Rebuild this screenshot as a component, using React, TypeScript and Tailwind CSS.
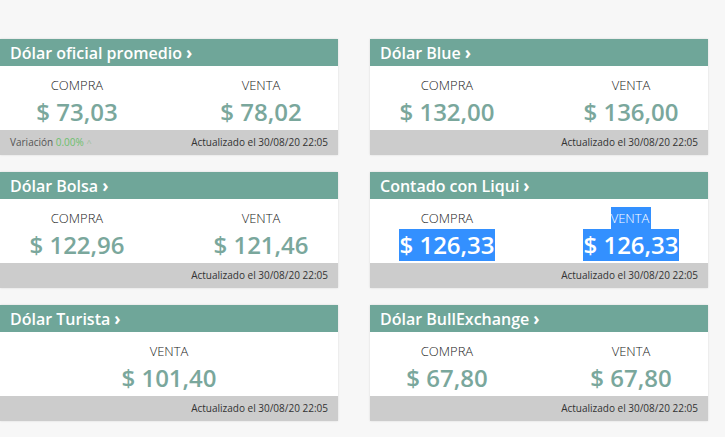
type Quote = {
  title: string;
  compra?: string;
  venta: string;
  variacion?: string;
  selected?: boolean;
};

const quotes: Quote[] = [
  { title: "Dólar oficial promedio", compra: "73,03", venta: "78,02", variacion: "0.00%" },
  { title: "Dólar Blue", compra: "132,00", venta: "136,00" },
  { title: "Dólar Bolsa", compra: "122,96", venta: "121,46" },
  { title: "Contado con Liqui", compra: "126,33", venta: "126,33", selected: true },
  { title: "Dólar Turista", venta: "101,40" },
  { title: "Dólar BullExchange", compra: "67,80", venta: "67,80" },
];

function Price({ label, value, selected, highlightLabel }: { label: string; value: string; selected?: boolean; highlightLabel?: boolean }) {
  return (
    <div className="flex flex-col items-center">
      <div className="h-[18px] flex items-end">
        <span
          className={
            "text-[13px] leading-[22px] font-light " +
            (highlightLabel ? "bg-[#3390ff] text-white pr-[2px]" : "text-[#222]")
          }
        >
          {label}
        </span>
      </div>
      <span
        className={
          "text-[24px] leading-[32px] font-semibold whitespace-nowrap " +
          (selected ? "bg-[#3390ff] text-white" : "text-[#7aa79c]")
        }
      >
        $ {value}
      </span>
    </div>
  );
}

function Card({ q }: { q: Quote }) {
  return (
    <div className="bg-white shadow-[0_0_2px_rgba(0,0,0,0.12)]">
      <div className="h-[27px] bg-[#6fa699] px-[10px] flex items-center text-white font-semibold text-[16px] leading-none">
        {q.title}
        <span className="ml-[4px] font-bold text-[17px]">›</span>
      </div>
      <div className="h-[64px] pt-[12px]">
        {q.compra ? (
          <div className="flex justify-between">
            <div className="w-[154px] flex justify-center">
              <Price label="COMPRA" value={q.compra} selected={q.selected} />
            </div>
            <div className="w-[154px] flex justify-center">
              <Price label="VENTA" value={q.venta} selected={q.selected} highlightLabel={q.selected} />
            </div>
          </div>
        ) : (
          <div className="flex justify-center">
            <Price label="VENTA" value={q.venta} />
          </div>
        )}
      </div>
      <div className="h-[25px] bg-[#cccccc] px-[10px] flex items-center justify-between text-[10px] text-[#333]">
        {q.variacion ? (
          <span className="text-[#555]">
            Variación <span className="text-[#6cbf6c]">{q.variacion}</span>{" "}
            <span className="text-[#9fbf9f] text-[9px]">^</span>
          </span>
        ) : (
          <span />
        )}
        <span>Actualizado el 30/08/20 22:05</span>
      </div>
    </div>
  );
}

export default function App() {
  return (
    <div
      className="w-[725px] h-[437px] bg-[#f7f7f7] pt-[39px] overflow-hidden"
      style={{ fontFamily: '"Open Sans", "Noto Sans", sans-serif' }}
    >
      <div className="grid grid-cols-[338px_338px] gap-x-[32px] gap-y-[17px]">
        {quotes.map((q) => (
          <Card key={q.title} q={q} />
        ))}
      </div>
    </div>
  );
}
